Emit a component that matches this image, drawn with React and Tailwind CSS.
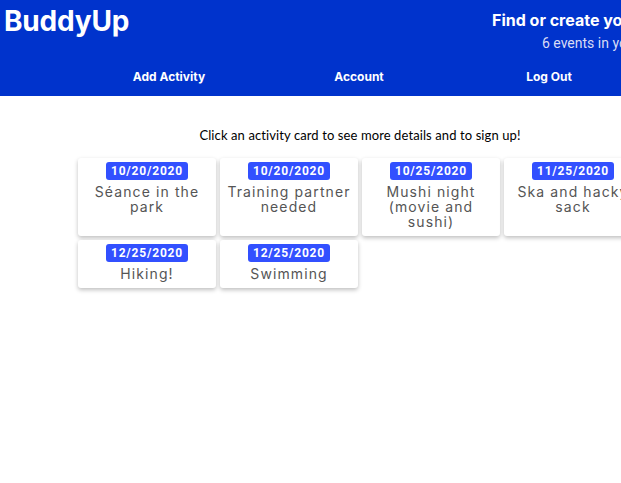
import React from "react";

const activities = [
  { date: "10/20/2020", title: "Séance in the park" },
  { date: "10/20/2020", title: "Training partner needed" },
  { date: "10/25/2020", title: "Mushi night (movie and sushi)" },
  { date: "11/25/2020", title: "Ska and hacky sack" },
  { date: "12/25/2020", title: "Hiking!" },
  { date: "12/25/2020", title: "Swimming" },
];

function ActivityCard({ date, title }) {
  return (
    <div className="w-[138px] bg-white rounded-[3px] shadow-[0_2px_4px_rgba(0,0,0,0.25)] flex flex-col items-center pt-[4px] pb-[7px] px-[6px] cursor-pointer">
      <span className="bg-[#3250ff] text-white rounded-[3px] px-[5px] h-[18px] leading-[18px] text-[12px] font-bold tracking-[0.8px] font-['Roboto',sans-serif]">
        {date}
      </span>
      <p className="mt-[4px] text-center text-[#555] text-[14px] leading-[15px] tracking-[1.1px] font-['Inter',sans-serif]">
        {title}
      </p>
    </div>
  );
}

export default function App() {
  return (
    <div className="w-full h-[483px] overflow-hidden bg-white">
      <div className="w-[720px]">
        <header className="bg-[#0033cc] h-[96px] flex flex-col">
          <div className="flex justify-between">
            <h1 className="pl-[4px] pt-[3px] text-white text-[28px] font-bold leading-[36px] font-['Inter',sans-serif] tracking-[-0.2px]">
              BuddyUp
            </h1>
            <div className="flex flex-col items-start pt-[10px] w-[228px]">
              <span className="text-white text-[16px] font-bold leading-[20px] whitespace-nowrap font-['Inter',sans-serif]">
                Find or create your next activity
              </span>
              <span className="mt-[4px] ml-[50px] text-[#d8dcf5] text-[14px] leading-[18px] whitespace-nowrap font-['Roboto',sans-serif]">
                6 events in your area
              </span>
            </div>
          </div>
          <nav className="mt-auto mb-[10px] ml-[74px] w-[570px] flex">
            {["Add Activity", "Account", "Log Out"].map((n) => (
              <a key={n} className="flex-1 text-center text-white text-[12px] font-bold font-['Inter',sans-serif] cursor-pointer">
                {n}
              </a>
            ))}
          </nav>
        </header>
        <main className="flex flex-col items-center">
          <p className="mt-[30px] text-[13px] text-black font-['Lato',sans-serif] leading-[18px] tracking-[0.1px]">
            Click an activity card to see more details and to sign up!
          </p>
          <div className="mt-[14px] w-[564px] flex flex-wrap gap-[4px]">
            {activities.map((a, i) => (
              <ActivityCard key={i} {...a} />
            ))}
          </div>
        </main>
      </div>
    </div>
  );
}
